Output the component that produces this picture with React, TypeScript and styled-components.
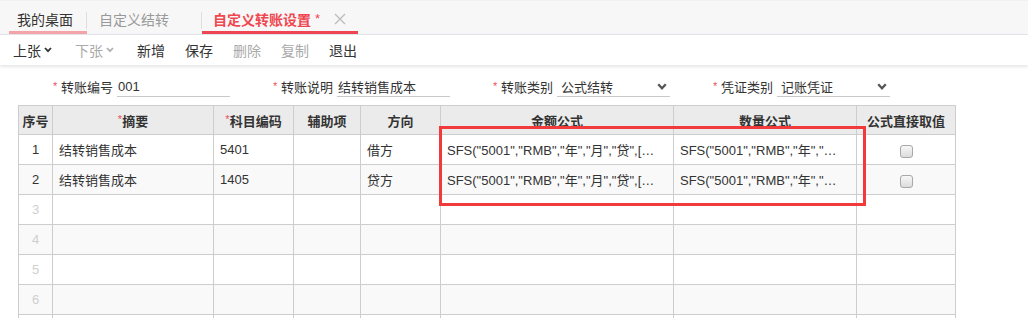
import React from 'react';
import styled, { createGlobalStyle, css } from 'styled-components';

// Types
interface Field {
  label: string;
  value: string;
  select?: boolean;
}

interface Row {
  no: number;
  summary?: string;
  code?: string;
  aux?: string;
  dir?: string;
  amount?: string;
  qty?: string;
  check?: boolean;
}

const FORMULA = 'SFS("5001","RMB","年","月","贷",[结转销售成本])';

const fields: Field[] = [
  { label: '转账编号', value: '001' },
  { label: '转账说明', value: '结转销售成本' },
  { label: '转账类别', value: '公式结转', select: true },
  { label: '凭证类别', value: '记账凭证', select: true },
];

const rows: Row[] = [
  { no: 1, summary: '结转销售成本', code: '5401', dir: '借方', amount: FORMULA, qty: FORMULA, check: true },
  { no: 2, summary: '结转销售成本', code: '1405', dir: '贷方', amount: FORMULA, qty: FORMULA, check: true },
  { no: 3 },
  { no: 4 },
  { no: 5 },
  { no: 6 },
  { no: 7 },
];

const colWidths = [34, 161, 80, 67, 80, 233, 183, 99];

// Styled Components
const GlobalStyle = createGlobalStyle`
  html, body {
    margin: 0;
    padding: 0;
    background: #fff;
  }
  body {
    font-family: "Liberation Sans", "Noto Sans CJK SC", sans-serif;
    font-size: 13px;
    color: #333;
    overflow: hidden;
  }
  * {
    box-sizing: border-box;
  }
`;

const Page = styled.div`
  width: 1028px;
  height: 318px;
  overflow: hidden;
`;

const TabBar = styled.div`
  display: flex;
  height: 35px;
  padding-left: 9px;
  background: #f7f7f7;
  border-top: 1px solid #f0f0f0;
  border-bottom: 1px solid #e3e3eb;
`;

const Tab = styled.div<{ $width: number; $pad: number; $line: string; $color: string; $bold?: boolean; $sep?: boolean }>`
  position: relative;
  display: flex;
  align-items: center;
  width: ${({ $width }) => $width}px;
  height: 34px;
  margin-top: -1px;
  padding: 6px 0 0 ${({ $pad }) => $pad}px;
  font-size: 14px;
  font-weight: ${({ $bold }) => ($bold ? 700 : 400)};
  color: ${({ $color }) => $color};
  border-bottom: 3px solid ${({ $line }) => $line};
  white-space: nowrap;

  ${({ $sep }) =>
    $sep &&
    css`
      &::before {
        content: '';
        position: absolute;
        left: -1px;
        top: 12px;
        height: 17px;
        border-left: 1px solid #dedede;
      }
    `}
`;

const Star = styled.span`
  margin-left: 4px;
  font-weight: 400;
  font-size: 13px;
`;

const CloseIcon = styled.svg`
  margin-left: 14px;
  flex: none;
`;

const Toolbar = styled.div`
  position: relative;
  z-index: 1;
  display: flex;
  align-items: center;
  gap: 20px;
  height: 30px;
  padding-left: 13px;
  background: #fff;
  box-shadow: 0 2px 3px rgba(0, 0, 0, 0.1);
`;

const ToolButton = styled.span<{ $disabled?: boolean; $menu?: boolean }>`
  display: inline-flex;
  align-items: center;
  gap: 3px;
  padding-right: ${({ $menu }) => ($menu ? 3 : 0)}px;
  font-size: 14px;
  color: ${({ $disabled }) => ($disabled ? '#a9a9a9' : '#333')};
`;

const FormRow = styled.div`
  display: flex;
  gap: 43px;
  height: 40px;
  padding: 11px 0 0 53px;
`;

const FieldGroup = styled.div`
  display: flex;
  align-items: center;
  height: 21px;
`;

const Required = styled.span`
  width: 8px;
  font-size: 11px;
  color: #ec4c5e;
  align-self: flex-start;
  padding-top: 4px;
`;

const Label = styled.span`
  width: 52px;
  margin-right: 4px;
  font-size: 13px;
  color: #333;
  white-space: nowrap;
`;

const InputBox = styled.div<{ $select?: boolean }>`
  display: flex;
  align-items: center;
  justify-content: space-between;
  width: 113px;
  height: 21px;
  padding: 0 3px 0 ${({ $select }) => ($select ? 4 : 1)}px;
  border-bottom: 1px solid #c8c8c8;
  font-size: 13px;
  color: #333;
  white-space: nowrap;
`;

const TableWrap = styled.div`
  position: relative;
  margin-left: 18px;
  width: 937px;
`;

const Grid = styled.table`
  width: 937px;
  table-layout: fixed;
  border-collapse: collapse;
`;

const HeadCell = styled.th`
  height: 29px;
  padding: 0;
  background: #ebebeb;
  border: 1px solid #cdcdcd;
  font-size: 13px;
  font-weight: 700;
  color: #333;
  text-align: center;
  white-space: nowrap;
`;

const HeadStar = styled.span`
  font-size: 11px;
  font-weight: 400;
  color: #ec4c5e;
  vertical-align: 3px;
`;

const BodyRow = styled.tr<{ $even: boolean }>`
  background: ${({ $even }) => ($even ? '#f9f9f9' : '#fff')};
`;

const Cell = styled.td<{ $center?: boolean; $muted?: boolean; $formula?: boolean }>`
  height: 30px;
  padding: 0 ${({ $formula }) => ($formula ? 9 : 6)}px 0 6px;
  border: 1px solid #cdcdcd;
  font-size: 13px;
  color: ${({ $muted }) => ($muted ? '#cfcfcf' : '#333')};
  text-align: ${({ $center }) => ($center ? 'center' : 'left')};
  white-space: nowrap;
  overflow: hidden;
  text-overflow: ellipsis;
`;

const CheckBox = styled.span`
  display: inline-block;
  width: 13px;
  height: 13px;
  margin-top: 3px;
  border: 1px solid #a8a8a8;
  border-radius: 3px;
  background: linear-gradient(#f7f7f7, #dcdcdc);
  vertical-align: middle;
`;

const Highlight = styled.div`
  position: absolute;
  left: 421px;
  top: 21px;
  width: 427px;
  height: 80px;
  border: 3px solid #f03a3c;
  pointer-events: none;
`;

// Icons
const Chevron: React.FC<{ color: string; size?: number }> = ({ color, size = 8 }) => (
  <svg width={size} height={size * 0.7} viewBox="0 0 8 5.6">
    <polyline points="1,1 4,4.2 7,1" fill="none" stroke={color} strokeWidth="1.8" />
  </svg>
);

const Header: React.FC = () => (
  <TabBar>
    <Tab $width={78} $pad={8} $line="#f4a3a9" $color="#333">我的桌面</Tab>
    <Tab $width={115} $pad={12} $line="transparent" $color="#999" $sep>自定义结转</Tab>
    <Tab $width={156} $pad={11} $line="#ef4552" $color="#f0464f" $bold $sep>
      自定义转账设置<Star>*</Star>
      <CloseIcon width="12" height="12" viewBox="0 0 12 12">
        <path d="M1 1 L11 11 M11 1 L1 11" stroke="#bdbdbd" strokeWidth="1.4" />
      </CloseIcon>
    </Tab>
  </TabBar>
);

const Actions: React.FC = () => (
  <Toolbar>
    <ToolButton $menu>
      上张<Chevron color="#333" />
    </ToolButton>
    <ToolButton $menu $disabled>
      下张<Chevron color="#b0b0b0" />
    </ToolButton>
    <ToolButton>新增</ToolButton>
    <ToolButton>保存</ToolButton>
    <ToolButton $disabled>删除</ToolButton>
    <ToolButton $disabled>复制</ToolButton>
    <ToolButton>退出</ToolButton>
  </Toolbar>
);

const Form: React.FC = () => (
  <FormRow>
    {fields.map((f) => (
      <FieldGroup key={f.label}>
        <Required>*</Required>
        <Label>{f.label}</Label>
        <InputBox $select={f.select}>
          <span>{f.value}</span>
          {f.select && <Chevron color="#555" size={10} />}
        </InputBox>
      </FieldGroup>
    ))}
  </FormRow>
);

export default function App() {
  return (
    <Page>
      <GlobalStyle />
      <Header />
      <Actions />
      <Form />
      <TableWrap>
        <Grid>
          <colgroup>
            {colWidths.map((w, i) => (
              <col key={i} style={{ width: w }} />
            ))}
          </colgroup>
          <thead>
            <tr>
              <HeadCell>序号</HeadCell>
              <HeadCell>
                <HeadStar>*</HeadStar>摘要
              </HeadCell>
              <HeadCell>
                <HeadStar>*</HeadStar>科目编码
              </HeadCell>
              <HeadCell>辅助项</HeadCell>
              <HeadCell>方向</HeadCell>
              <HeadCell>金额公式</HeadCell>
              <HeadCell>数量公式</HeadCell>
              <HeadCell>公式直接取值</HeadCell>
            </tr>
          </thead>
          <tbody>
            {rows.map((r, i) => (
              <BodyRow key={r.no} $even={i % 2 === 1}>
                <Cell $center $muted={!r.summary}>{r.no}</Cell>
                <Cell>{r.summary}</Cell>
                <Cell>{r.code}</Cell>
                <Cell>{r.aux}</Cell>
                <Cell>{r.dir}</Cell>
                <Cell $formula>{r.amount}</Cell>
                <Cell $formula>{r.qty}</Cell>
                <Cell $center>{r.check && <CheckBox />}</Cell>
              </BodyRow>
            ))}
          </tbody>
        </Grid>
        <Highlight />
      </TableWrap>
    </Page>
  );
}
